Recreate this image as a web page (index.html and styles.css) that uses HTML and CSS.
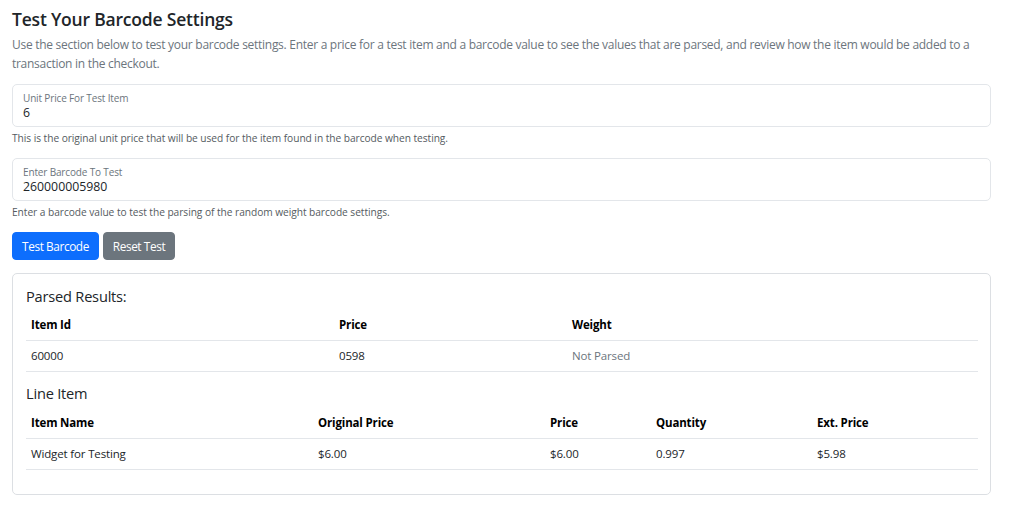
FILE: index.html
```html
<!DOCTYPE html>
<html lang="en">
<head>
<meta charset="utf-8">
<title>Test Your Barcode Settings</title>
<link rel="stylesheet" href="styles.css">
</head>
<body>
<main class="page">
  <h4 class="title">Test Your Barcode Settings</h4>
  <p class="lead-text">Use the section below to test your barcode settings. Enter a price for a test item and a barcode value to see the values that are parsed, and review how the item would be added to a transaction in the checkout.</p>

  <div class="field">
    <div class="floating">
      <label class="float-label">Unit Price For Test Item</label>
      <div class="float-value">6</div>
    </div>
    <div class="help">This is the original unit price that will be used for the item found in the barcode when testing.</div>
  </div>

  <div class="field">
    <div class="floating">
      <label class="float-label">Enter Barcode To Test</label>
      <div class="float-value">260000005980</div>
    </div>
    <div class="help">Enter a barcode value to test the parsing of the random weight barcode settings.</div>
  </div>

  <div class="actions">
    <button class="btn btn-primary">Test Barcode</button>
    <button class="btn btn-secondary">Reset Test</button>
  </div>

  <section class="card">
    <h5 class="card-heading">Parsed Results:</h5>
    <table class="tbl tbl-parsed">
      <thead>
        <tr><th class="c1">Item Id</th><th class="c2">Price</th><th>Weight</th></tr>
      </thead>
      <tbody>
        <tr><td>60000</td><td>0598</td><td class="muted">Not Parsed</td></tr>
      </tbody>
    </table>
    <h5 class="card-heading second">Line Item</h5>
    <table class="tbl tbl-line">
      <thead>
        <tr><th class="l1">Item Name</th><th class="l2">Original Price</th><th class="l3">Price</th><th class="l4">Quantity</th><th>Ext. Price</th></tr>
      </thead>
      <tbody>
        <tr><td>Widget for Testing</td><td>$6.00</td><td>$6.00</td><td>0.997</td><td>$5.98</td></tr>
      </tbody>
    </table>
  </section>
</main>
</body>
</html>
```

FILE: styles.css
```css
* { box-sizing: border-box; }
html, body { margin: 0; padding: 0; background: #fff; }
body {
  font-family: "Open Sans", "Noto Sans", "Liberation Sans", sans-serif;
  font-size: 12.8px;
  color: #212529;
  line-height: 1.5;
}
.page {
  width: 979px;
  margin-left: 12px;
  padding-top: 9px;
}
.title {
  margin: 0 0 6px 0;
  font-size: 17.5px;
  font-weight: 600;
  line-height: 1.2;
  color: #212529;
  letter-spacing: -0.2px;
}
.lead-text {
  margin: 0 0 11px 0;
  color: #6c757d;
  font-size: 12px;
  line-height: 18.5px;
  letter-spacing: -0.28px;
}
.field { margin-bottom: 13px; }
.floating {
  height: 43px;
  border: 1px solid #e3e6ea;
  border-radius: 5px;
  padding: 6px 10px 0 10px;
}
.float-label {
  display: block;
  font-size: 10px;
  color: #6c757d;
  line-height: 14px;
  letter-spacing: -0.15px;
}
.float-value {
  font-size: 12.3px;
  line-height: 16px;
  color: #212529;
}
.help {
  margin-top: 4px;
  font-size: 10.2px;
  color: #555b61;
  line-height: 14px;
  letter-spacing: -0.05px;
}
.actions {
  display: flex;
  gap: 4px;
  margin-bottom: 13px;
}
.btn {
  font-family: inherit;
  font-size: 11.8px;
  line-height: 18px;
  padding: 4px 0;
  border-radius: 4px;
  border: 1px solid transparent;
  color: #fff;
  cursor: pointer;
  height: 28px;
  white-space: nowrap;
  letter-spacing: -0.4px;
  text-align: center;
}
.btn-primary { background: #0d6efd; border-color: #0d6efd; width: 87px; }
.btn-secondary { background: #6c757d; border-color: #6c757d; width: 72px; }
.card {
  border: 1px solid #dcdfe3;
  border-radius: 5px;
  padding: 12px 12px 24px 13px;
}
.card-heading {
  margin: 0 0 3px 0;
  font-size: 14.6px;
  font-weight: 500;
  line-height: 20px;
  color: #212529;
  letter-spacing: -0.2px;
}
.card-heading.second { margin-top: 11px; margin-bottom: 5px; }
.tbl {
  width: 100%;
  border-collapse: collapse;
  font-size: 11.5px;
}
.tbl th, .tbl td {
  text-align: left;
  padding: 0 5px;
  height: 31px;
  border-bottom: 1px solid #e3e6ea;
  vertical-align: middle;
  letter-spacing: -0.15px;
}
.tbl th { font-weight: 700; color: #000; }
.tbl td { color: #212529; }
.tbl td.muted { color: #6c757d; }
.tbl-parsed .c1 { width: 308px; }
.tbl-parsed .c2 { width: 233px; }
.tbl-line .l1 { width: 287px; }
.tbl-line .l2 { width: 232px; }
.tbl-line .l3 { width: 106px; }
.tbl-line .l4 { width: 161px; }
```
